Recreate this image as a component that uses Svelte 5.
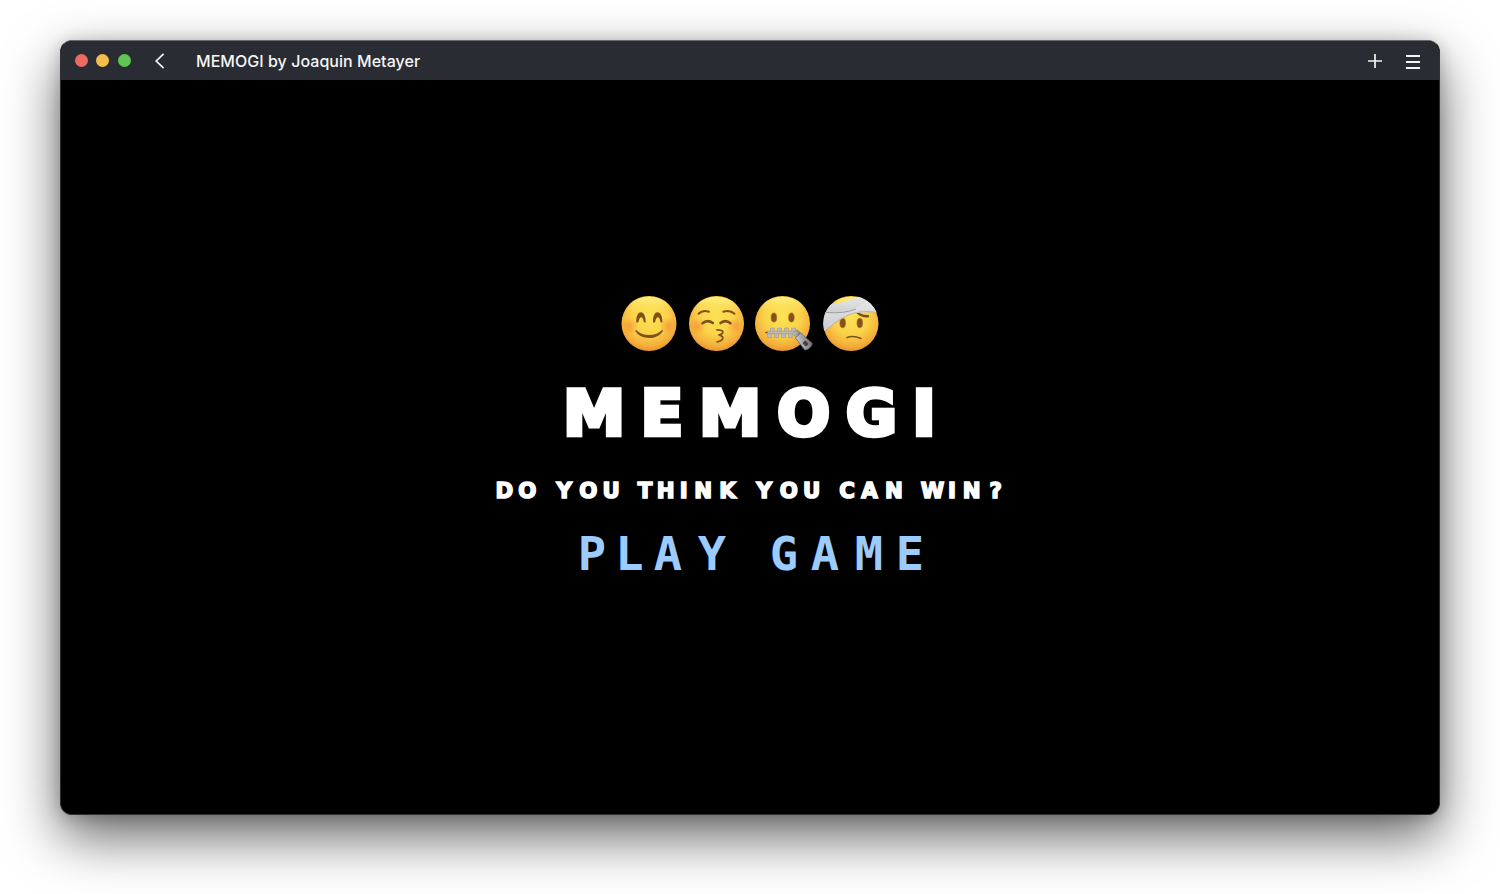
<script>
  const title = { text: 'MEMOGI', x: [30, 98, 166, 239.5, 307.5, 360] };
  const question = {
    text: 'DO YOU THINK YOU CAN WIN?',
    x: [10.3, 33.2, 49, 70.2, 94.2, 117.2, 134, 151, 171.7, 189.7, 209.2, 233.4, 251, 270.3, 294.8, 317.7, 334, 353, 375.5, 400, 418, 438.5, 458, 477.7, 501.7]
  };
  const play = { text: 'PLAY GAME', x: [16, 53.5, 92, 136, 172, 208, 249, 293, 334] };
</script>

<main class="desktop">
  <section class="window">
    <header class="bar">
      <div class="lights"><i class="red"></i><i class="yellow"></i><i class="green"></i></div>
      <svg class="back" width="10" height="16" viewBox="0 0 10 16"><path d="M8.6 .8 L1.2 8 L8.6 15.2" /></svg>
      <span class="name">MEMOGI by Joaquin Metayer</span>
      <svg class="plus" width="16" height="16" viewBox="0 0 16 16"><path d="M8 1V15M1 8H15" /></svg>
      <svg class="menu" width="14" height="16" viewBox="0 0 14 16"><path d="M0 2H14M0 8H14M0 14H14" /></svg>
    </header>

    <div class="stage">
      <svg class="faces" width="258" height="58" viewBox="0 0 258 58">
        <defs>
          <radialGradient id="skin" cx="50%" cy="38%" r="64%">
            <stop offset="0" stop-color="#fce253" />
            <stop offset=".5" stop-color="#fad34a" />
            <stop offset=".83" stop-color="#f4ae3b" />
            <stop offset="1" stop-color="#e58f2c" />
          </radialGradient>
          <linearGradient id="shine" x2="0" y2="1">
            <stop offset="0" stop-color="#fff58c" stop-opacity=".85" />
            <stop offset=".5" stop-color="#ffe45a" stop-opacity="0" />
          </linearGradient>
          <radialGradient id="blush">
            <stop offset="0" stop-color="#f5762b" stop-opacity=".48" />
            <stop offset="1" stop-color="#f5762b" stop-opacity="0" />
          </radialGradient>
          <linearGradient id="metal" x2="1" y2="1">
            <stop offset="0" stop-color="#d2d2d4" />
            <stop offset="1" stop-color="#6d6d72" />
          </linearGradient>
          <linearGradient id="cloth" x2="0" y2="1">
            <stop offset="0" stop-color="#e9e9ea" />
            <stop offset="1" stop-color="#cacbce" />
          </linearGradient>
          <clipPath id="head"><circle cx="28" cy="28.5" r="27.8" /></clipPath>
          <g id="face">
            <circle cx="28" cy="28.5" r="27.5" fill="url(#skin)" />
            <ellipse cx="28" cy="19" rx="23" ry="17" fill="url(#shine)" />
          </g>
        </defs>

        <g>
          <use href="#face" />
          <circle cx="9" cy="31" r="9" fill="url(#blush)" />
          <circle cx="47" cy="31" r="9" fill="url(#blush)" />
          <path class="brown" d="M15.3 27C14.8 14 24.8 14 24.7 27C24.6 27.8 23.1 27.8 22.7 26.8C21.8 20.7 18.8 20.7 17.5 26.7C17 27.7 15.5 27.9 15.3 27Z" />
          <path class="brown" d="M32 27C31.5 14 41.5 14 41.4 27C41.3 27.8 39.8 27.8 39.4 26.8C38.5 20.7 35.5 20.7 34.2 26.7C33.7 27.7 32.2 27.9 32 27Z" />
          <path class="brown" d="M14.4 35.8C14.1 35 15 34.6 15.7 35.4C22 41.4 34.2 41.4 40.5 35.4C41.2 34.6 42.2 35 41.8 35.9C37 45.4 19.2 45.4 14.4 35.8Z" />
        </g>

        <g transform="translate(67.5 0)">
          <use href="#face" />
          <circle cx="9" cy="31" r="9" fill="url(#blush)" />
          <circle cx="47" cy="31" r="9" fill="url(#blush)" />
          <g class="line">
            <path d="M10 18.8Q14.2 14.5 20.4 16.7M34.8 16.7Q41.5 14.5 46 18.8" stroke-width="2" />
            <path d="M14 28.3Q18.8 24 24.4 28.1M32 28.1Q37.2 24 42 28.3" stroke-width="2.5" />
            <path d="M28.5 34.8C36 34.8 36 38.5 30 40.2C36 40.4 36 45.7 28.7 46.8" stroke-width="1.8" />
          </g>
        </g>

        <g transform="translate(133.5 0)">
          <use href="#face" />
          <ellipse class="eye" cx="19.4" cy="22.5" rx="2.8" ry="4.6" />
          <ellipse class="eye" cx="36.9" cy="22.5" rx="2.8" ry="4.6" />
          <path d="M11.4 37.5H42" stroke="#814717" stroke-width="1.6" stroke-linecap="round" />
          <g fill="#bcbcbf" stroke="#8d8178" stroke-width=".4">
            {#each [16, 23, 30, 37] as x}
              <path d="M{x} 33H{x + 4}V38.4H{x}Z" />
            {/each}
            {#each [13, 20, 27, 34] as x}
              <path d="M{x} 38H{x + 4}V42.5H{x}Z" />
            {/each}
            <path d="M13 36.2H42V38.8H13Z" />
          </g>
          <g transform="translate(41 38) rotate(-42)">
            <rect x="-2.4" y="-1.5" width="6" height="6" rx="1.6" fill="url(#metal)" stroke="#777" stroke-width=".5" />
            <path d="M-3.4 3.5L4 3.5L5.4 19Q1 22-4.4 19Z" fill="url(#metal)" stroke="#6c6c70" stroke-width=".8" />
            <rect x="-1.5" y="12" width="4" height="5" rx="1" fill="#47413a" />
          </g>
        </g>

        <g transform="translate(202 0)">
          <use href="#face" />
          <ellipse class="eye" cx="19.7" cy="28" rx="2.8" ry="4.8" />
          <ellipse class="eye" cx="36.8" cy="28" rx="2.8" ry="4.8" />
          <g class="line">
            <path d="M34.6 17.7Q39 21.7 45 21.2" stroke-width="2.5" />
            <path d="M23.8 42.6Q30 40 38 43.5" stroke-width="1.5" />
          </g>
          <g clip-path="url(#head)">
            <path d="M0 10Q22 9 38 0L50 5L58 16C36 20 18 16 0 21Z" fill="url(#cloth)" />
            <path d="M0 17Q26 21 49 3L58 18Q33 14 20 23Q10 29 2 36L0 36Z" fill="url(#cloth)" />
            <path d="M3 17.5Q21 19 33 14" fill="none" stroke="#9b9da3" stroke-width="1" />
            <path d="M2 36Q19 21 31 18Q42 15 57 18" fill="none" stroke="#b9a58c" stroke-width=".7" />
          </g>
        </g>
      </svg>

      <svg class="title" width="372" height="56" viewBox="0 0 372 56" role="heading" aria-level="1">
        <text x={title.x.join(' ')} y="51">{title.text}</text>
      </svg>
      <svg class="question" width="512" height="24" viewBox="0 0 512 24">
        <text x={question.x.join(' ')} y="20">{question.text}</text>
      </svg>
      <svg class="play" width="348" height="42" viewBox="0 0 348 42" role="button" tabindex="0">
        <text x={play.x.join(' ')} y="38">{play.text}</text>
      </svg>
    </div>
  </section>
</main>

<style>
  :global(body) { background: #fff; overflow: hidden; }
  .desktop { box-sizing: border-box; width: 1500px; height: 894px; padding: 40px 60px 79px; overflow: hidden; }
  .window {
    box-sizing: border-box;
    width: 1380px;
    height: 775px;
    border: 1px solid #303030;
    border-top-color: #666b6e;
    border-radius: 12px;
    background: #000;
    overflow: hidden;
    display: flex;
    flex-direction: column;
    box-shadow: 0 22px 54px rgba(0, 0, 0, .6), 0 2px 16px rgba(0, 0, 0, .2);
  }
  .bar { box-sizing: border-box; flex: 0 0 39px; display: flex; align-items: center; padding: 0 19px 0 13.5px; background: #2a2c33; color: #f6f6f6; }
  .lights { display: flex; gap: 8.5px; }
  .lights i { width: 13px; height: 13px; border-radius: 50%; }
  .red { background: #ed6a5e; }
  .yellow { background: #f4be4f; }
  .green { background: #61c554; }
  .bar path { fill: none; stroke: #f4f4f4; stroke-width: 1.7; }
  .back { margin-left: 24.5px; }
  .name { flex: 1; margin-left: 31px; font: 500 16px/20px Inter, "Liberation Sans", sans-serif; letter-spacing: .04px; white-space: nowrap; }
  .menu { margin: 2px 0 0 23px; }
  .menu path { stroke-width: 2; }
  .stage { flex: 1; display: flex; flex-direction: column; align-items: center; padding-top: 215px; }
  svg { display: block; flex-shrink: 0; overflow: visible; }
  .brown { fill: #81501a; }
  .eye { fill: #85501a; stroke: #a36a21; stroke-width: .6; }
  .line path { fill: none; stroke: #80501b; stroke-linecap: round; }
  text { font-family: "DejaVu Sans", sans-serif; font-weight: 700; text-anchor: middle; fill: #fff; stroke: #fff; stroke-linejoin: miter; }
  .title { margin-top: 31px; }
  .title text { font-size: 62px; stroke-width: 4.6px; }
  .question { margin-top: 38px; }
  .question text { font-size: 21.3px; stroke-width: 1.6px; }
  .play { margin-top: 30px; }
  .play text { font-family: "DejaVu Sans Mono", monospace; font-size: 47px; fill: #9bcbff; stroke: none; }
</style>
